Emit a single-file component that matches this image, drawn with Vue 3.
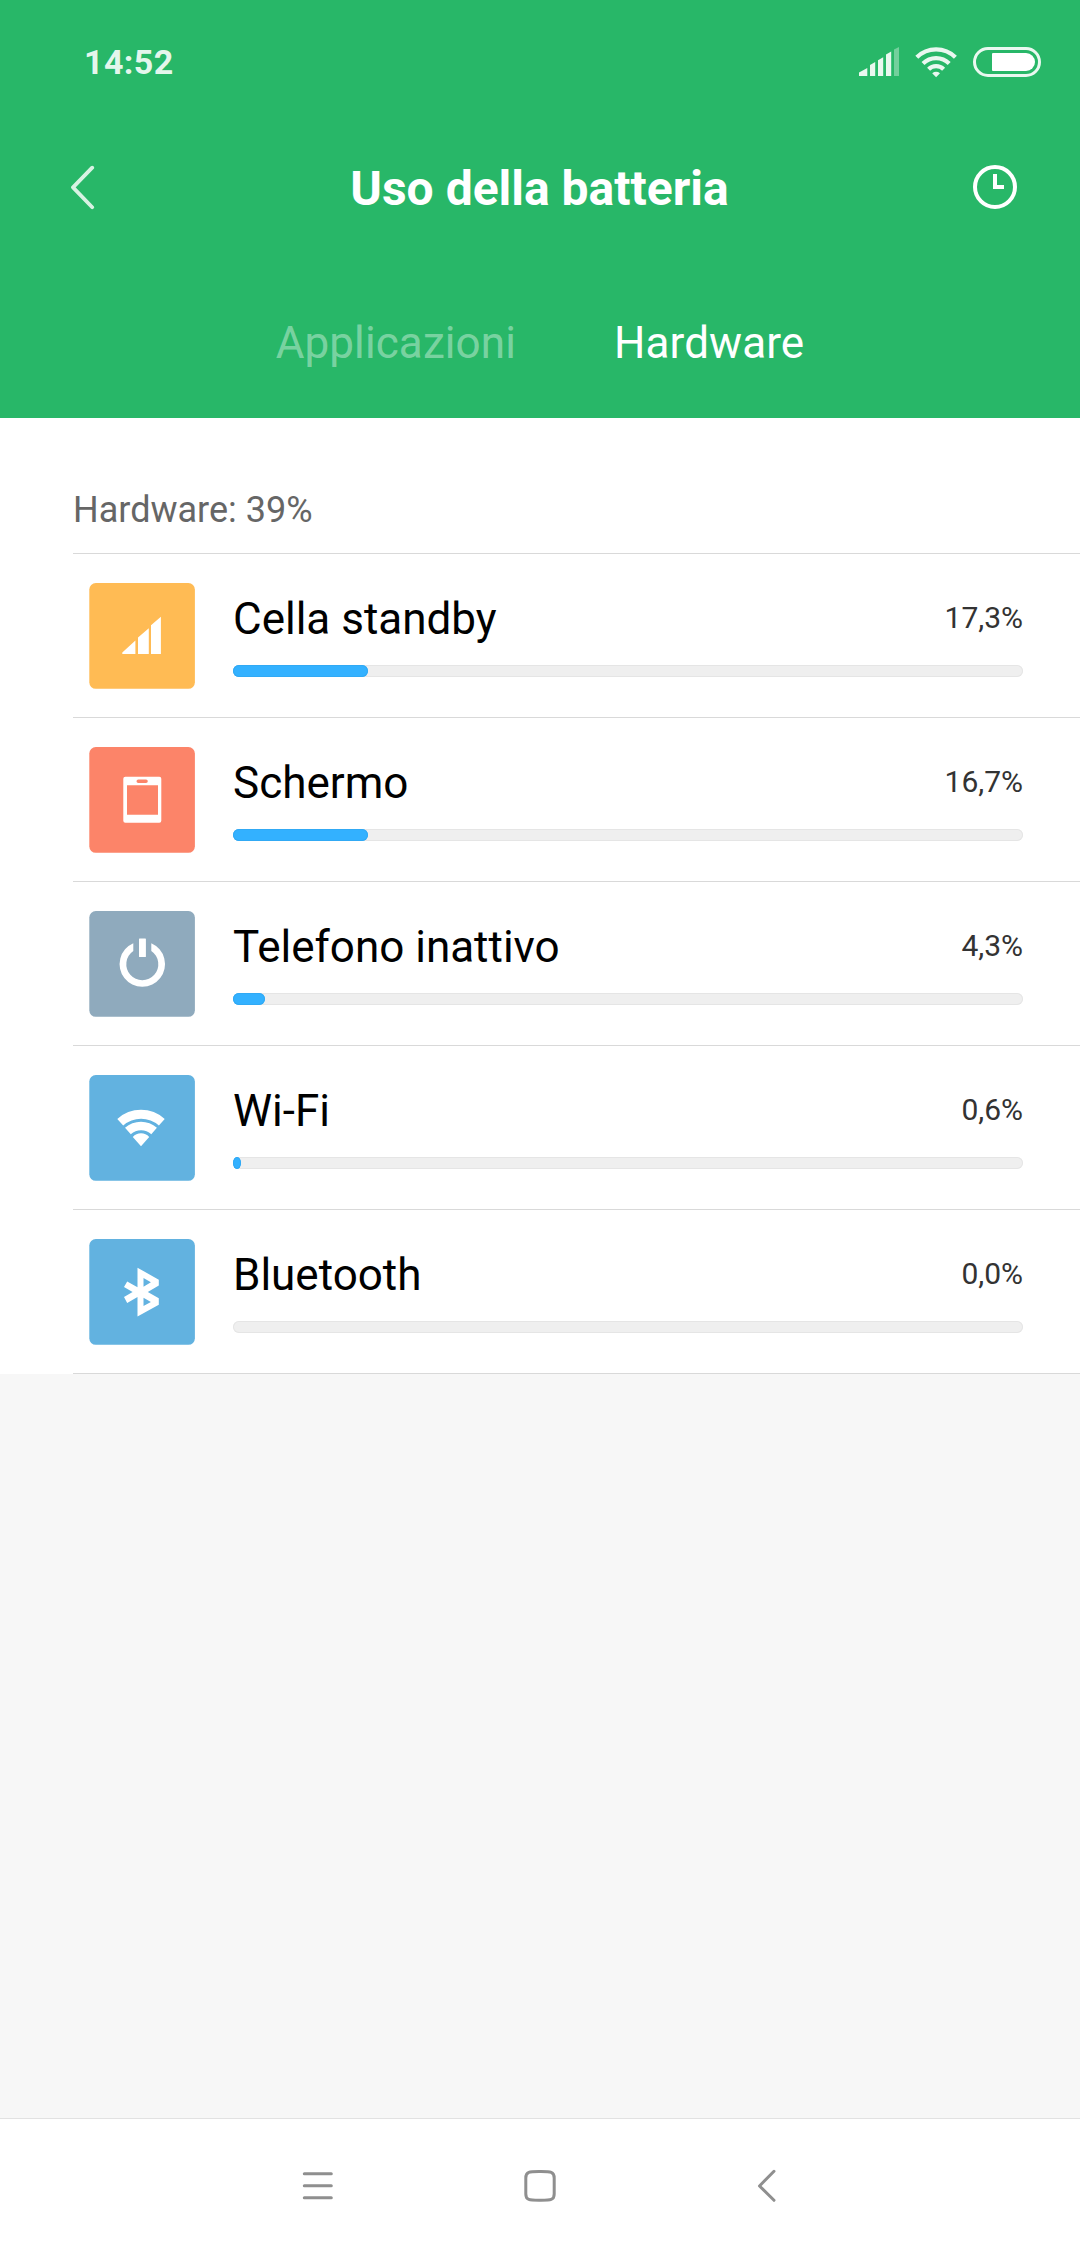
<script setup>
const items = [
  { id: 'cell', name: 'Cella standby', percent: '17,3%', fill: 135, color: '#ffbb54' },
  { id: 'screen', name: 'Schermo', percent: '16,7%', fill: 135, color: '#fc8469' },
  { id: 'idle', name: 'Telefono inattivo', percent: '4,3%', fill: 32, color: '#8faabd' },
  { id: 'wifi', name: 'Wi-Fi', percent: '0,6%', fill: 8, color: '#62b2e0' },
  { id: 'bluetooth', name: 'Bluetooth', percent: '0,0%', fill: 0, color: '#62b2e0' },
]
</script>

<template>
  <div class="screen">
    <header class="header">
      <div class="status">
        <span class="time">14:52</span>
        <div class="status-icons">
          <svg class="signal" width="40" height="30" viewBox="0 0 40 30" fill="#fff">
            <path d="M0 29V25.6L8.3 21V29ZM11 29V18L16.2 15V29ZM19 29V13.3L24.2 10.3V29ZM27 29V7.6L32.2 4.5V29Z" opacity=".9" />
            <path d="M35 29V2.4L40 0V29Z" opacity=".35" />
          </svg>
          <svg class="wifi" width="43" height="31" viewBox="0 0 43 31" fill="none" stroke="#fff" stroke-width="4.2" opacity=".9">
            <path d="M1.8 10.2A27.5 27.5 0 0 1 40.4 10.2M8 16.6A18.5 18.5 0 0 1 34.2 16.6M13.6 22.3A10.6 10.6 0 0 1 28.6 22.3" />
            <path d="M17.2 26.2Q21.1 23.4 25 26.2L21.1 30.2Z" fill="#fff" stroke="none" />
          </svg>
          <div class="battery"><div class="charge"></div></div>
        </div>
      </div>
      <div class="titlebar">
        <svg width="26" height="46" viewBox="0 0 26 46" fill="none" stroke="#fff" stroke-width="3.8" stroke-linecap="round" stroke-linejoin="round" opacity=".82">
          <path d="M22.2 3.7L3 23.4L22.2 43.2" />
        </svg>
        <h1>Uso della batteria</h1>
        <svg width="44" height="44" viewBox="0 0 44 44" fill="none" stroke="#fff" stroke-width="4">
          <circle cx="22" cy="22" r="20" />
          <path d="M22 9V22H31" />
        </svg>
      </div>
      <nav class="tabs">
        <span class="tab">Applicazioni</span>
        <span class="tab active">Hardware</span>
      </nav>
    </header>

    <section class="panel">
      <div class="summary">Hardware: 39%</div>
      <div v-for="item in items" :key="item.id" class="row">
        <svg class="tile" width="106" height="106" viewBox="0 0 106 106" fill="#fff">
          <rect x=".3" width="105.6" height="105.8" rx="6.5" :fill="item.color" />
          <path v-if="item.id === 'cell'" d="M33.3 71V69.4L46.4 57.5V71ZM49 71V54.5L59.8 45.2V71ZM62 71V42.3L71.9 33.7V71Z" />
          <path
            v-else-if="item.id === 'screen'"
            fill-rule="evenodd"
            d="M36.3 29.7H70.3Q72.3 29.7 72.3 31.7V73.7Q72.3 75.7 70.3 75.7H36.3Q34.3 75.7 34.3 73.7V31.7Q34.3 29.7 36.3 29.7ZM38 38.3V67.7H69V38.3ZM49.3 32.4A1.8 1.8 0 0 0 49.3 36H57A1.8 1.8 0 0 0 57 32.4Z"
          />
          <g v-else-if="item.id === 'idle'">
            <path d="M44.3 32.2A22.7 22.7 0 1 0 62.3 32.2V40A16 16 0 1 1 44.3 40Z" />
            <rect x="50" y="27.5" width="6.9" height="18.5" rx=".6" />
          </g>
          <path
            v-else-if="item.id === 'wifi'"
            d="M28.3 44A34.8 34.8 0 0 1 75.7 44L69.9 50.4A27 27 0 0 0 34.2 50.4ZM36 52.8A23.8 23.8 0 0 1 67.9 52.8L62.3 59.2A15.5 15.5 0 0 0 41.8 59.2ZM43.8 62A11 11 0 0 1 60.2 62L52 71.3Z"
          />
          <path
            v-else
            fill-rule="evenodd"
            d="M48.5 28.7L69.8 40.7V46.6L58.8 53L69.8 59.2V65.8L48.5 77.5V58L38.2 64L35 58L43.6 53L35 48L38.2 42.4L48.5 48.3ZM54.5 39V47.7L61.9 43.3ZM54.5 58.8V67L61.9 62.9Z"
          />
        </svg>
        <div class="info">
          <div class="labels">
            <span class="name">{{ item.name }}</span>
            <span class="percent">{{ item.percent }}</span>
          </div>
          <div class="bar">
            <div v-if="item.fill" class="fill" :style="{ width: item.fill + 'px' }"></div>
          </div>
        </div>
      </div>
    </section>

    <footer class="navbar">
      <svg width="31" height="34" viewBox="0 0 31 34" fill="none" stroke="#8f8f8f" stroke-width="3" stroke-linecap="round">
        <path d="M2.3 4.7H29.3M2.3 16.8H29.3M2.3 28.8H29.3" />
      </svg>
      <svg class="home" width="32" height="34" viewBox="0 0 32 34" fill="none" stroke="#8f8f8f" stroke-width="3">
        <path d="M16 2.6C26.5 2.6 30.2 2.4 30.2 9V25C30.2 31.4 26.5 31.2 16 31.2S1.8 31.4 1.8 25V9C1.8 2.4 5.5 2.6 16 2.6Z" />
      </svg>
      <svg width="19" height="34" viewBox="0 0 19 34" fill="none" stroke="#8f8f8f" stroke-width="3" stroke-linecap="round" stroke-linejoin="round">
        <path d="M17 2.3L2.5 17L17 31.3" />
      </svg>
    </footer>
  </div>
</template>

<style>
body {
  margin: 0;
}
</style>

<style scoped>
.screen {
  width: 1080px;
  height: 2248px;
  display: flex;
  flex-direction: column;
  background: #f7f7f7;
  font-family: Roboto, "Noto Sans", sans-serif;
  overflow: hidden;
}
.header {
  height: 418px;
  flex: none;
  background: #28b768;
  color: #fff;
}
.status {
  height: 124px;
  box-sizing: border-box;
  padding: 0 39px 0 84px;
  display: flex;
  align-items: center;
  justify-content: space-between;
}
.time {
  font-size: 34px;
  line-height: 40px;
  font-weight: 700;
  letter-spacing: 0.4px;
  color: rgba(255, 255, 255, 0.9);
}
.status-icons {
  display: flex;
  align-items: center;
  height: 32px;
}
.signal {
  margin-right: 16px;
}
.wifi {
  margin-right: 15px;
}
.battery {
  width: 68px;
  height: 30px;
  box-sizing: border-box;
  border: 3px solid rgba(255, 255, 255, 0.9);
  border-radius: 15px;
  padding: 3px;
  display: flex;
  justify-content: flex-end;
}
.charge {
  width: 43px;
  height: 18px;
  background: #fff;
  border-radius: 1px 9px 9px 1px;
}
.titlebar {
  height: 126px;
  padding: 0 63px 0 70px;
  display: flex;
  align-items: center;
  justify-content: space-between;
}
h1 {
  margin: 3px 0 0 10px;
  font-size: 48px;
  line-height: 60px;
  font-weight: 700;
}
.tabs {
  margin-top: 2px;
  height: 166px;
  display: flex;
  justify-content: center;
  gap: 98px;
}
.tab {
  font-size: 44px;
  line-height: 182px;
  letter-spacing: 0.1px;
  color: rgba(255, 255, 255, 0.4);
}
.tab.active {
  color: #fff;
}
.panel {
  background: #fff;
  padding-left: 73px;
}
.summary {
  height: 136px;
  box-sizing: border-box;
  padding-top: 68px;
  font-size: 36px;
  line-height: 48px;
  color: #666;
  border-bottom: 1px solid #d9d9d9;
}
.row {
  height: 164px;
  box-sizing: border-box;
  padding: 29px 57px 0 16px;
  display: flex;
  gap: 38px;
  border-bottom: 1px solid #d9d9d9;
}
.tile {
  flex: none;
}
.info {
  flex: 1;
}
.labels {
  height: 82px;
  display: flex;
  justify-content: space-between;
}
.name {
  font-size: 44px;
  line-height: 72px;
  color: #000;
}
.percent {
  font-size: 30px;
  line-height: 70px;
  color: #333;
}
.bar {
  height: 12px;
  background: #efefef;
  border-radius: 6px;
  box-shadow: inset 0 0 0 1px #e5e5e5;
}
.fill {
  height: 12px;
  background: #33b1ff;
  border-radius: min(6px, 50%);
  box-shadow: inset 0 0 0 1px #31a9f4;
}
.navbar {
  margin-top: auto;
  height: 130px;
  box-sizing: border-box;
  border-top: 1px solid #e2e2e2;
  background: #fff;
  padding: 4px 0 0 302px;
  display: flex;
  align-items: center;
}
.home {
  margin: 0 201px 0 191px;
}
</style>
